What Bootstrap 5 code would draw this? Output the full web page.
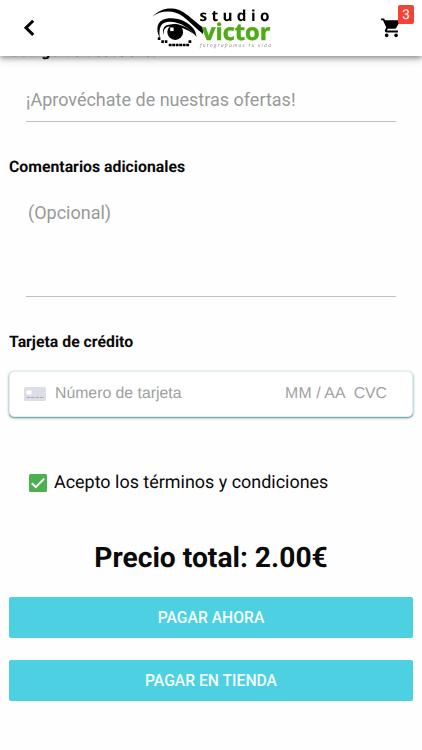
<!DOCTYPE html>
<html lang="es">
<head>
<meta charset="utf-8">
<meta name="viewport" content="width=device-width, initial-scale=1">
<title>Studio Victor</title>
<link href="https://cdn.jsdelivr.net/npm/bootstrap@5.3.0/dist/css/bootstrap.min.css" rel="stylesheet">
<style>
body{font-family:Roboto,"Liberation Sans",sans-serif;font-size:16px;line-height:24px;color:#0a0a0a;background:#fefefe;height:750px;overflow:hidden;text-rendering:geometricPrecision}
.topbar{height:56px;box-shadow:0 2px 5px rgba(0,0,0,.38),0 5px 9px rgba(0,0,0,.1)}
.back-btn{width:24px;height:24px;margin-left:20px;margin-top:-2px}
.cart-btn{width:34px;height:56px;margin-right:8px}
.cart-count{top:5px;right:0;width:16px;height:19px;font-size:13.5px;line-height:20px;border-radius:2px;background:#f44336;color:#fff}
.logo{left:152px;top:7px}
main{padding:39px 9px 0}
.section-title{font-size:15.8px;line-height:24px;font-weight:700;margin:0;height:24px}
.line-field{margin:0 17px;border:0;border-bottom:1px solid #c0c0c0;border-radius:0;background:transparent;font-size:18px;line-height:24px;width:370px;resize:none;padding:0;box-shadow:none!important;color:#9b9b9b}
.line-field::placeholder{color:#999;opacity:1}
.coupon{height:35px;margin-top:24px;margin-bottom:33px;padding-bottom:9px}
.notes{height:96px;margin-top:22px;margin-bottom:33px;padding:0 2px}
.pay-card{height:46px;margin-top:17px;border:1px solid #dfeeee;border-radius:5px;background:#fff;box-shadow:0 1px 3px #7aa9ac,0 1px 1px #80adb0;padding:0 25px 1px 14px;font-family:"Liberation Sans",Arial,sans-serif;font-size:15.8px;color:#a0a0a0}
.card-number{margin-left:9px}
.card-date{letter-spacing:.12px}
.terms{margin-top:54px;padding-left:20px;font-size:17.95px;height:24px}
.terms-text{margin-left:7px}
.total{font-size:28.2px;line-height:36px;font-weight:700;margin:45px 0 0}
.buttons{gap:22px;margin-top:21px}
.pay-btn{height:41px;border:0;border-radius:2px;background:#4dd0e1!important;color:#f4feff!important;font-size:15.7px;font-weight:500;line-height:24px;padding:0}
</style>
</head>
<body>
<header class="topbar fixed-top bg-white d-flex align-items-center justify-content-between">
  <a class="back-btn d-block" href="#" aria-label="Volver"><svg class="d-block" width="24" height="24" viewBox="0 0 24 24"><path d="M13.2 5.2 6 12.300l7.200 7.100" transform="translate(0 .5)" fill="none" stroke="#000" stroke-width="3"/></svg></a>
  <svg class="logo position-absolute" width="121" height="44" viewBox="0 0 121 44">
    <path d="M0 9.500C7 3.500 13 1 20 1.500c8 .500 14 5 19 9.500 5 4 8 7 12 9.500v6.500C44 21.500 38 15 31 9.500 22 2.500 9 3 0 9.500Z"/>
    <path d="M8 31.500C3 22 5 13.500 14 11.700c11-2 21 2.300 27 9.300 2.500 3 3 6 3.500 9C38 21.500 29 14.800 17 14.800 8.500 15 6.300 22 8 31.500Z"/>
    <path d="M14 18.500c10-3 21-.5 28.500 9C33 21 25 18.500 17 19.500c-4 .5-6 4-5 9-2-5-.5-8.500 2-10Z"/>
    <circle cx="23.200" cy="25" r="7.900"/><path d="M18.200 20.500h3.400v3.600h-3.400z" fill="#fff"/>
    <path d="M5.800 30.300h2.600v2.600H5.800zm3.500 3h2.600v2.600H9.300zm3.500 0h2.600v2.600h-2.600zM36.500 33.300h2.800v2.600h-2.800z"/>
    <path d="M16.700 38h20.500" fill="none" stroke="#000" stroke-width="2.600" stroke-dasharray="2.900 .600"/>
    <text x="47.500" y="13.500" font-family="Open Sans,sans-serif" font-size="15.300" font-weight="700" letter-spacing="4.350">studio</text>
    <text x="50" y="32.700" font-family="Open Sans,sans-serif" font-size="23" font-weight="700" fill="#4dab13" stroke="#4dab13" stroke-width=".5" textLength="68.500" lengthAdjust="spacingAndGlyphs">victor</text>
    <text x="48" y="40" font-family="Open Sans,sans-serif" font-size="5" font-style="italic" fill="#8a8a8a" textLength="71">fotografiamos tu vida</text>
  </svg>
  <a class="cart-btn position-relative d-block" href="#" aria-label="Carrito">
    <svg class="d-block" width="34" height="56" viewBox="0 0 34 56"><path transform="translate(.1 16.500) scale(.94)" d="M7 18c-1.100 0-2 .900-2 2s.900 2 2 2 2-.900 2-2-.900-2-2-2zM1 2v2h2l3.600 7.600-1.350 2.450C4.520 15.370 5.480 17 7 17h12v-2H7.420l-.1-.2L8.100 13h7.450c.75 0 1.410-.41 1.750-1.030L20.900 5.500C21.250 4.820 20.760 4 20 4H5.210l-.94-2H1zm16 16c-1.100 0-2 .900-2 2s.900 2 2 2 2-.900 2-2-.900-2-2-2z"/></svg>
    <span class="cart-count position-absolute text-center">3</span>
  </a>
</header>
<main>
  <h2 class="section-title">Código de descuento</h2>
  <input class="line-field coupon d-block" placeholder="¡Aprovéchate de nuestras ofertas!" aria-label="Código de descuento">
  <h2 class="section-title">Comentarios adicionales</h2>
  <textarea class="line-field notes d-block" placeholder="(Opcional)" aria-label="Comentarios adicionales"></textarea>
  <h2 class="section-title">Tarjeta de crédito</h2>
  <div class="pay-card d-flex align-items-center">
    <svg class="flex-shrink-0" width="22" height="14" viewBox="0 0 22 14"><rect width="22" height="14" rx="1.500" fill="#dddde8"/><rect x="2.500" y="3.500" width="5" height="4" rx=".8" fill="#fff"/><path d="M2.500 10.500h17" stroke="#aaaab8" stroke-width="1.200" stroke-dasharray="3.600 .9"/></svg>
    <span class="card-number flex-grow-1">Número de tarjeta</span>
    <span class="card-date">MM / AA</span>
    <span class="ms-2">CVC</span>
  </div>
  <label class="terms d-flex align-items-center">
    <svg class="flex-shrink-0" width="18" height="18" viewBox="0 0 18 18"><rect width="18" height="18" rx="1.500" fill="#4caf50"/><path d="m2.800 9.200 4 4 8.400-8.600" fill="none" stroke="#fff" stroke-width="2"/></svg>
    <span class="terms-text">Acepto los términos y condiciones</span>
  </label>
  <h1 class="total text-center">Precio total: 2.00€</h1>
  <div class="d-grid buttons">
    <button class="btn pay-btn" type="button">PAGAR AHORA</button>
    <button class="btn pay-btn" type="button">PAGAR EN TIENDA</button>
  </div>
</main>
<script src="https://cdn.jsdelivr.net/npm/bootstrap@5.3.0/dist/js/bootstrap.bundle.min.js"></script>
</body>
</html>
